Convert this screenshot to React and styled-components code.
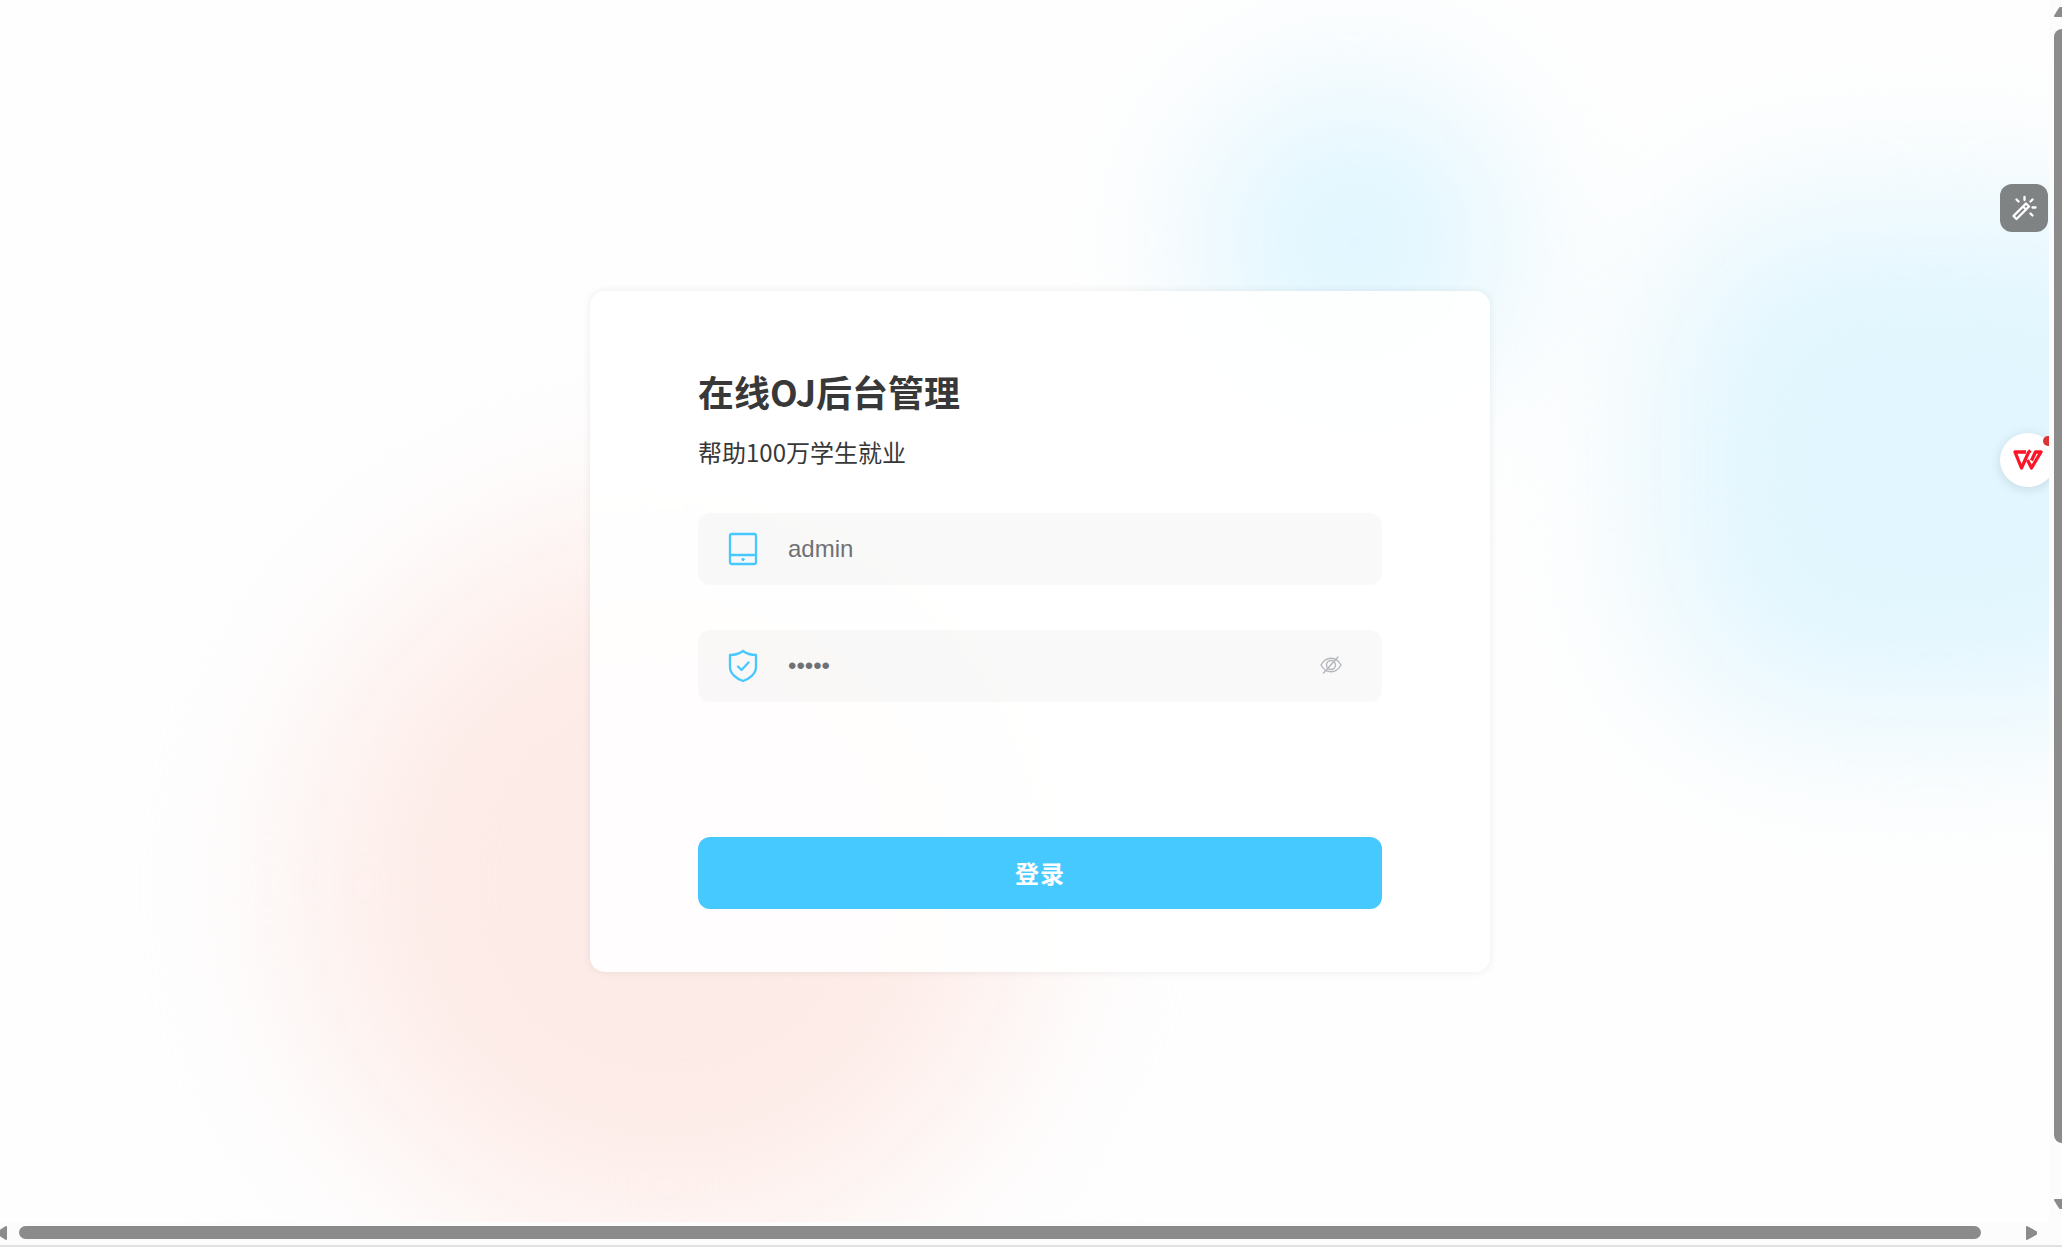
import React, { useState } from "react";
import styled, { createGlobalStyle } from "styled-components";

const GlobalStyle = createGlobalStyle`
  *, *::before, *::after { box-sizing: border-box; }
  body {
    margin: 0;
    overflow: hidden;
    font-family: "Noto Sans CJK SC", "Liberation Sans", sans-serif;
    color: #383838;
  }
`;

const Frame = styled.div`
  display: grid;
  grid-template-columns: minmax(0, 1fr) 13px;
  grid-template-rows: minmax(0, 1fr) 25px;
  height: 100vh;
  overflow: hidden;
  background: #fcfcfc;
`;

const Page = styled.main`
  position: relative;
  display: flex;
  justify-content: center;
  align-items: center;
  padding: 40px 0 0 31px;
  overflow: hidden;
  background: #fefefe;
`;

const Glow = styled.div`
  position: absolute;
  left: ${(p) => p.$x};
  top: ${(p) => p.$y};
  width: ${(p) => p.$w}px;
  height: ${(p) => p.$h}px;
  border-radius: ${(p) => p.$radius};
  background: ${(p) => p.$color};
  filter: blur(${(p) => p.$blur}px);
`;

const Card = styled.form`
  position: relative;
  display: flex;
  flex-direction: column;
  width: 900px;
  padding: 70px 108px 63px;
  border-radius: 15px;
  background: rgba(255, 255, 255, 0.9);
  box-shadow: 0 0 8px rgba(0, 0, 0, 0.08);
`;

const Title = styled.h1`
  margin: 0;
  font-size: 36px;
  line-height: 60px;
  font-weight: 700;
`;

const Subtitle = styled.p`
  margin: 13px 0 43px;
  font-size: 24px;
  line-height: 36px;
`;

const Field = styled.label`
  display: flex;
  align-items: center;
  height: 72px;
  margin-bottom: 45px;
  padding: 0 38px 0 30px;
  border-radius: 12px;
  background: rgba(0, 0, 0, 0.024);
`;

const FieldIcon = styled.svg`
  flex: none;
  width: 30px;
  height: 34px;
  margin-right: 30px;
  fill: none;
  stroke: #46c8ff;
  stroke-width: 2.3;
  stroke-linejoin: round;
  stroke-linecap: round;
`;

const TextInput = styled.input`
  flex: 1;
  min-width: 0;
  padding: 0;
  border: 0;
  outline: 0;
  background: transparent;
  color: #707174;
  font-family: "Liberation Sans", sans-serif;
  font-size: 24px;
  line-height: 36px;
`;

const EyeButton = styled.button`
  display: flex;
  padding: 0;
  border: 0;
  background: none;
  color: #b4b7bc;
  cursor: pointer;
`;

const Submit = styled.button`
  height: 72px;
  margin-top: 90px;
  padding: 0;
  border: 0;
  border-radius: 12px;
  background: #46c9ff;
  color: #fff;
  font-family: inherit;
  font-size: 24px;
  font-weight: 700;
  letter-spacing: 1px;
  cursor: pointer;
`;

const WandButton = styled.button`
  position: absolute;
  top: 184px;
  right: 1px;
  display: flex;
  align-items: center;
  justify-content: center;
  width: 48px;
  height: 48px;
  padding: 0;
  border: 0;
  border-radius: 12px;
  background: #808384;
`;

const WpsButton = styled.button`
  position: absolute;
  top: 433px;
  right: -7px;
  display: flex;
  align-items: center;
  justify-content: center;
  width: 56px;
  height: 54px;
  padding: 0;
  border: 0;
  border-radius: 50%;
  background: #fff;
  box-shadow: 0 2px 12px rgba(0, 0, 0, 0.12);
`;

const Dot = styled.span`
  position: absolute;
  top: 3px;
  right: 3px;
  width: 10px;
  height: 10px;
  border-radius: 50%;
  background: #dc3434;
`;

const VerticalBar = styled.div`
  display: flex;
  flex-direction: column;
  align-items: flex-start;
  padding: 6px 0 12px 5px;
  overflow: hidden;
`;

const VerticalThumb = styled.div`
  flex: 1;
  width: 16px;
  margin: 11px 0 55px;
  border-radius: 8px;
  background: #8b8b8b;
`;

const HorizontalBar = styled.div`
  grid-column: 1 / -1;
  display: flex;
  align-items: center;
  padding: 0 24px 2px 0;
  border-bottom: 2px solid #e2e2e2;
`;

const HorizontalThumb = styled.div`
  flex: 1;
  height: 13px;
  margin: 0 45px 0 12px;
  border-radius: 7px;
  background: #8b8b8b;
`;

const Arrow = styled.svg`
  display: block;
  flex: none;
  fill: #8b8b8b;
  stroke: #8b8b8b;
  stroke-width: 2;
  stroke-linejoin: round;
`;

export default function App() {
  const [user, setUser] = useState("admin");
  const [password, setPassword] = useState("admin");
  const [visible, setVisible] = useState(false);

  return (
    <>
      <GlobalStyle />
      <Frame>
        <Page>
          <Glow $x="15%" $y="43%" $w={720} $h={720} $radius="50%" $color="#fdebe7" $blur={88} />
          <Glow $x="58.5%" $y="7%" $w={310} $h={310} $radius="50%" $color="#e0f6ff" $blur={72} />
          <Glow $x="81%" $y="17%" $w={550} $h={510} $radius="160px" $color="#e1f6fe" $blur={76} />
          <Card onSubmit={(e) => e.preventDefault()}>
            <Title>在线OJ后台管理</Title>
            <Subtitle>帮助100万学生就业</Subtitle>
            <Field>
              <FieldIcon viewBox="0 0 30 34" aria-hidden="true">
                <rect x="2" y="2" width="26" height="30" rx="2" />
                <path d="M2 23H28" />
                <circle cx="15" cy="27.500" r="1.200" fill="#46c8ff" strokeWidth="1" />
              </FieldIcon>
              <TextInput
                aria-label="admin"
                value={user}
                onChange={(e) => setUser(e.target.value)}
              />
            </Field>
            <Field>
              <FieldIcon viewBox="0 0 30 34" aria-hidden="true">
                <path d="M15 2C11 5 7 6 2 6V18C2 25 9 30 15 32C21 30 28 25 28 18V6C23 6 19 5 15 2Z" />
                <path d="M10 17.500L13.500 21L20.500 13.500" />
              </FieldIcon>
              <TextInput
                aria-label="password"
                type={visible ? "text" : "password"}
                value={password}
                onChange={(e) => setPassword(e.target.value)}
              />
              <EyeButton type="button" aria-label="toggle" onClick={() => setVisible(!visible)}>
                <svg width="26" height="24" viewBox="0 0 26 24" fill="none" stroke="currentColor" strokeWidth="1.400" strokeLinecap="round">
                  <path d="M3 11C8 2 18 2 23 11C18 20 8 20 3 11Z" />
                  <circle cx="13" cy="11" r="4.500" />
                  <path d="M5.500 19L20 3" />
                </svg>
              </EyeButton>
            </Field>
            <Submit type="submit">登录</Submit>
          </Card>
          <WandButton aria-label="wand">
            <svg width="26" height="26" viewBox="0 0 26 26" fill="none" stroke="#fff" strokeWidth="2.300" strokeLinecap="round" strokeLinejoin="round">
              <path d="M2.500 21L15 8.500L18 11.500L5.500 24Z M12 11.500L14.800 14.300" />
              <path d="M13.500 2V5M5.500 4.500L7.500 6.500M21.500 4.500L19.500 6.500M21.500 12.500H24.500M19.500 18.500L21.500 20.500" />
            </svg>
          </WandButton>
          <WpsButton aria-label="WPS">
            <svg width="32" height="22" viewBox="0 0 32 22" fill="none" stroke="#fb1526" strokeWidth="3.300" strokeLinejoin="round">
              <path d="M14 3H3L9.500 19L16.500 3.500L18.500 1.500" />
              <path d="M15.500 11L19.500 19L29 3H23.500L19.500 11.500" />
            </svg>
            <Dot />
          </WpsButton>
        </Page>
        <VerticalBar>
          <Arrow width="18" height="12" viewBox="0 0 18 12"><path d="M1 10L6 2H12L17 10Z" /></Arrow>
          <VerticalThumb />
          <Arrow width="18" height="12" viewBox="0 0 18 12"><path d="M1 2L6 10H12L17 2Z" /></Arrow>
        </VerticalBar>
        <HorizontalBar>
          <Arrow width="7" height="16" viewBox="4 0 7 16"><path d="M10 2L1 8L10 14Z" /></Arrow>
          <HorizontalThumb />
          <Arrow width="12" height="16" viewBox="0 0 12 16"><path d="M1 2L10 7V9L1 14Z" /></Arrow>
        </HorizontalBar>
      </Frame>
    </>
  );
}
